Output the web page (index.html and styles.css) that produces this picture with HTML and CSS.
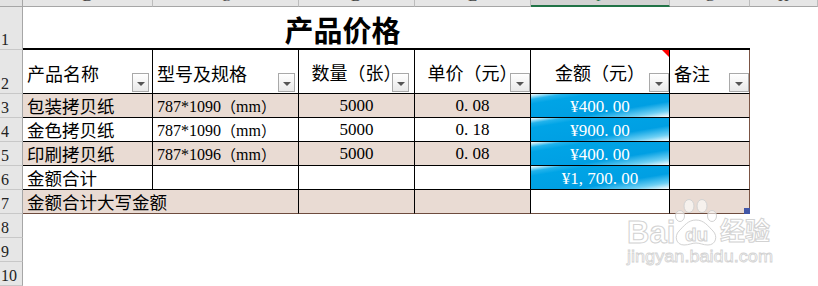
FILE: index.html
```html
<!DOCTYPE html>
<html lang="zh">
<head>
<meta charset="utf-8">
<title>产品价格</title>
<link rel="stylesheet" href="styles.css">
</head>
<body>
<div class="sheet">
  <div class="ch corner"></div>
  <div class="ch"><span>B</span></div>
  <div class="ch"><span>C</span></div>
  <div class="ch"><span>D</span></div>
  <div class="ch"><span>E</span></div>
  <div class="ch active"><span>F</span></div>
  <div class="ch"><span>G</span></div>
  <div class="ch"><span>H</span></div>

  <div class="rh">1</div>
  <div class="title">产品价格</div>
  <div class="title-end"></div>
  <div class="blank"></div>

  <div class="rh">2</div>
  <div class="c hd">产品名称<span class="fb"></span></div>
  <div class="c hd">型号及规格<span class="fb"></span></div>
  <div class="c hd mid">数量（张）<span class="fb fb-gap2"></span></div>
  <div class="c hd mid">单价（元）<span class="fb fb-wide"></span></div>
  <div class="c hd mid">金额（元）<span class="note"></span><span class="fb fb-wide"></span></div>
  <div class="c hd last">备注<span class="fb fb-wide"></span></div>
  <div class="blank"></div>

  <div class="rh">3</div>
  <div class="c tan">包装拷贝纸</div>
  <div class="c tan spec">787*1090<span class="cjk">（</span>mm<span class="cjk">）</span></div>
  <div class="c tan mid num">5000</div>
  <div class="c tan mid num">0<span class="p">.</span>08</div>
  <div class="c blue num">¥400<span class="p">.</span>00</div>
  <div class="c tan last"></div>
  <div class="blank"></div>

  <div class="rh">4</div>
  <div class="c">金色拷贝纸</div>
  <div class="c spec">787*1090<span class="cjk">（</span>mm<span class="cjk">）</span></div>
  <div class="c mid num">5000</div>
  <div class="c mid num">0<span class="p">.</span>18</div>
  <div class="c blue num">¥900<span class="p">.</span>00</div>
  <div class="c last"></div>
  <div class="blank"></div>

  <div class="rh">5</div>
  <div class="c tan">印刷拷贝纸</div>
  <div class="c tan spec">787*1096<span class="cjk">（</span>mm<span class="cjk">）</span></div>
  <div class="c tan mid num">5000</div>
  <div class="c tan mid num">0<span class="p">.</span>08</div>
  <div class="c blue num">¥400<span class="p">.</span>00</div>
  <div class="c tan last"></div>
  <div class="blank"></div>

  <div class="rh">6</div>
  <div class="c">金额合计</div>
  <div class="c"></div>
  <div class="c"></div>
  <div class="c"></div>
  <div class="c blue num">¥1<span class="p">,</span>700<span class="p">.</span>00</div>
  <div class="c last"></div>
  <div class="blank"></div>

  <div class="rh">7</div>
  <div class="c tan bottom span2">金额合计大写金额</div>
  <div class="c tan bottom"></div>
  <div class="c tan bottom"></div>
  <div class="c bottom"></div>
  <div class="c tan bottom last"><span class="handle"></span></div>
  <div class="blank"></div>

  <div class="rh">8</div>
  <div class="blank span7"></div>
  <div class="rh">9</div>
  <div class="blank span7"></div>
  <div class="rh">10</div>
  <div class="blank span7"></div>

  <svg class="watermark" width="160" height="76" viewBox="0 0 160 76">
    <g class="wm">
      <ellipse cx="58" cy="20" rx="4.5" ry="5.5"/>
      <ellipse cx="67" cy="10" rx="5" ry="6.5"/>
      <ellipse cx="80" cy="10" rx="5" ry="6.5"/>
      <ellipse cx="90" cy="20" rx="4.5" ry="5.5"/>
      <path d="M74 24 C82 24 86 30 91 35 C96 40 94 49 86 49 C81 49 78 47 74 47 C70 47 67 49 62 49 C54 49 52 40 57 35 C62 30 66 24 74 24 Z"/>
      <text x="5" y="47" class="wm-big">Bai</text>
      <text x="63" y="45" class="wm-du">du</text>
      <text x="98" y="44" class="wm-cjk">经验</text>
      <text x="5" y="66" class="wm-url" textLength="146" lengthAdjust="spacingAndGlyphs">jingyan.baidu.com</text>
    </g>
  </svg>
</div>
</body>
</html>
```
FILE: styles.css
```css
* { box-sizing: border-box; margin: 0; padding: 0; }
body {
  margin: 0;
  background: #fff;
  font-family: "Noto Sans CJK SC", sans-serif;
  color: #000;
  overflow: hidden;
}
.sheet {
  position: relative;
  display: grid;
  grid-template-columns: 23px 130px 146px 116px 116px 139px 80px 68px;
  grid-template-rows: 7px 43px 44px repeat(8, 24px);
  width: 818px;
  height: 286px;
}
.ch {
  background: #e6e6e6;
  border-right: 1px solid #bdbdbd;
  border-bottom: 1px solid #a6a6a6;
  display: flex;
  justify-content: center;
  align-items: flex-end;
  overflow: hidden;
  padding-bottom: 2px;
  font: 15px/15px "Liberation Serif", serif;
  color: #444;
}
.ch span { display: block; }
.ch.corner { background: #e2e2e2; border-right-color: #a6a6a6; }
.ch.active {
  background: #d3d3d3;
  border-bottom: 2px solid #217346;
  padding-bottom: 1px;
  color: #217346;
}
.rh {
  background: #e6e6e6;
  border-right: 1px solid #a6a6a6;
  border-bottom: 1px solid #c8c8c8;
  display: flex;
  align-items: flex-end;
  padding: 0 0 1px 1px;
  font: 16px/16px "Liberation Serif", serif;
  color: #222;
}
.title {
  grid-column: span 5;
  border-bottom: 2px solid #000;
  display: flex;
  justify-content: center;
  align-items: center;
  padding: 4px 8px 0 0;
  font-size: 29px;
  font-weight: 700;
  line-height: 1;
}
.title-end { border-bottom: 2px solid #000; }
.blank { background: #fff; }
.span7 { grid-column: span 7; }
.span2 { grid-column: span 2; }
.c {
  position: relative;
  border-right: 1px solid #000;
  border-bottom: 1px solid #000;
  display: flex;
  align-items: center;
  padding: 0 4px;
  white-space: nowrap;
  font-size: 17.5px;
  line-height: 1;
}
.c.last { border-right-color: #7b5444; }
.c.bottom { border-bottom-color: #6e4c3e; }
.c.mid { justify-content: center; padding: 0; }
.tan { background: #e9dbd3; }
.hd { font-size: 18px; padding-top: 2px; }
.spec {
  font: 16px/1 "Liberation Serif", serif;
  padding-top: 2px;
}
.cjk { font-family: "Noto Sans CJK SC", sans-serif; font-size: 15px; }
.num {
  font: 17px/1 "Liberation Serif", serif;
  padding-top: 2px;
}
.p {
  display: inline-block;
  width: 0.5em;
  text-align: left;
}
.blue {
  justify-content: center;
  color: #fff;
  padding: 2px 0 0;
  background: linear-gradient(to bottom right, #ffffff 0%, #a6e2f8 5%, #22b3ec 12%, #00a4e6 22%, #009fe3 66%, #6fd0f4 86%, #ffffff 100%);
}
.fb {
  position: absolute;
  right: 3px;
  bottom: 1px;
  width: 17px;
  height: 19px;
  border: 1px solid #a9a9a9;
  background: linear-gradient(#ffffff, #e9e9e9);
}
.fb::after {
  content: "";
  position: absolute;
  left: 50%;
  top: 8px;
  margin-left: -4px;
  border-left: 4px solid transparent;
  border-right: 4px solid transparent;
  border-top: 4px solid #555;
}
.fb-gap2 { right: 5px; }
.fb-wide { right: 0; width: 20px; }
.note {
  position: absolute;
  top: 0;
  right: 0;
  border-top: 7px solid #ff0000;
  border-left: 7px solid transparent;
}
.handle {
  position: absolute;
  right: -1px;
  bottom: -1px;
  width: 6px;
  height: 6px;
  background: #4257a8;
}
.watermark {
  position: absolute;
  left: 622px;
  top: 196px;
}
.wm {
  fill: #ffffff;
  fill-opacity: 0.6;
  stroke: #d2d2d2;
  stroke-width: 1;
}
.wm-big { font: 700 31px "Liberation Sans", sans-serif; }
.wm-du { font: 700 19px "Liberation Sans", sans-serif; }
.wm-cjk { font: 700 25px "Noto Sans CJK SC", sans-serif; }
.wm-url { font: 17px "Liberation Sans", sans-serif; stroke-width: 0.8; }
```
